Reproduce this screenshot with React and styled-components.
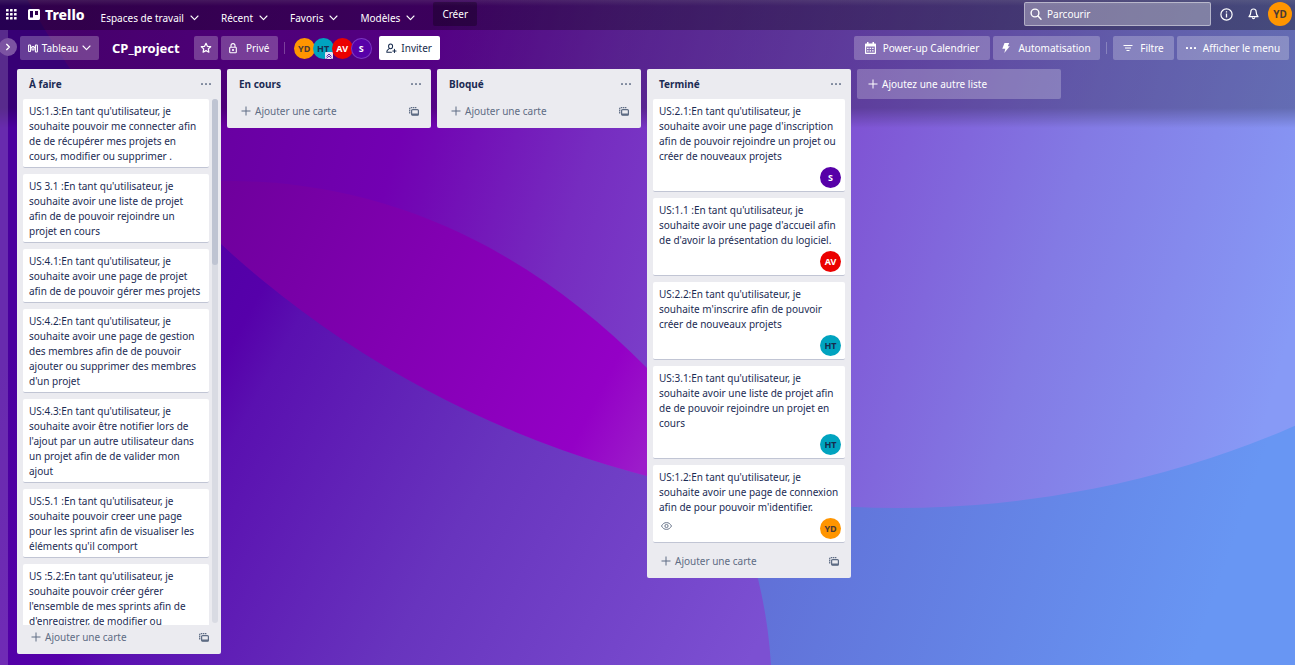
import React from "react";
import styled, { createGlobalStyle } from "styled-components";

const GlobalStyle = createGlobalStyle`
  *, *::before, *::after { box-sizing: border-box; }
  body {
    margin: 0;
    background: #5600aa;
    color: #1b2b54;
    font: 10px/15px "Noto Sans", "Open Sans", sans-serif;
  }
  button, input { font: inherit; color: inherit; }
  button { border: 0; padding: 0; background: none; cursor: pointer; }
  h1, h2, p, ul { margin: 0; padding: 0; }
  ul { list-style: none; }
  svg { display: block; flex: none; }
`;

const Page = styled.div`
  position: relative;
  isolation: isolate;
  display: flex;
  flex-direction: column;
  height: 100vh;
  overflow: hidden;
`;

const Wallpaper = styled.svg`
  position: absolute;
  inset: 0;
  z-index: -2;
  width: 100%;
  height: 100%;
`;

const TopShade = styled.div`
  position: absolute;
  inset: 0 0 auto;
  z-index: -1;
  height: 128px;
  background: linear-gradient(rgba(0, 0, 0, 0.26) 108px, rgba(0, 0, 0, 0));
`;

const Header = styled.header`
  display: flex;
  align-items: flex-start;
  height: 30px;
  padding: 2px 3px 0 6px;
  color: #fff;
  background: linear-gradient(rgba(60, 60, 60, 0.4), rgba(0, 0, 0, 0.3) 6px);
`;

const IconButton = styled.button`
  display: flex;
  align-items: center;
  justify-content: center;
  width: ${(p) => p.$w || 27}px;
  height: 24px;
`;

const Logo = styled.a`
  display: flex;
  align-items: center;
  gap: 5px;
  height: 25px;
  margin: 0 16px 0 11px;
  color: #fff;
  font-size: 14px;
  font-weight: 800;
  text-decoration: none;
`;

const Nav = styled.nav`
  display: flex;
  gap: 22px;
  padding-top: 4px;
`;

const NavItem = styled.button`
  display: flex;
  align-items: center;
  gap: 6px;
  height: 24px;
`;

const CreateButton = styled.button`
  height: 24px;
  margin-left: 18px;
  padding: 0 9px;
  border-radius: 2px;
  background: rgba(0, 0, 0, 0.28);
`;

const Tools = styled.div`
  display: flex;
  align-items: center;
  margin-left: auto;

  & > :last-child { margin-left: 1px; }
`;

const Search = styled.label`
  display: flex;
  align-items: center;
  gap: 5px;
  width: 187px;
  height: 24px;
  margin-right: 2px;
  padding: 0 5px;
  border: 1px solid rgba(255, 255, 255, 0.42);
  border-radius: 2px;
  background: rgba(255, 255, 255, 0.32);

  input {
    flex: 1;
    min-width: 0;
    padding: 0;
    border: 0;
    outline: 0;
    background: none;
  }
  input::placeholder { color: #fff; opacity: 1; }
`;

const avatarTones = {
  YD: ["#ff9500", "#4a3a35"],
  HT: ["#00a3bf", "#172b4d"],
  AV: ["#eb0000", "#fff"],
  S: ["#5700a8", "#fff"],
};

const Avatar = styled.span`
  position: relative;
  display: flex;
  align-items: center;
  justify-content: center;
  flex: none;
  width: ${(p) => p.$size || 21}px;
  height: ${(p) => p.$size || 21}px;
  border-radius: 50%;
  background: ${(p) => avatarTones[p.$who][0]};
  color: ${(p) => avatarTones[p.$who][1]};
  font-size: ${(p) => (p.$size ? 10 : 9)}px;
  font-weight: 700;
  box-shadow: ${(p) => (p.$ring ? "inset 0 0 0 1px rgba(140, 80, 200, 0.7)" : "none")};
`;

const AdminMark = styled.svg`
  position: absolute;
  right: 1px;
  bottom: 0;
`;

const Body = styled.div`
  display: flex;
  flex: 1;
  min-height: 0;
`;

const Sidebar = styled.aside`
  position: relative;
  flex: none;
  width: 8px;
  background: rgba(255, 255, 255, 0.17);
`;

const SidebarToggle = styled.button`
  position: absolute;
  top: 8px;
  left: -1px;
  display: flex;
  align-items: center;
  justify-content: center;
  width: 18px;
  height: 18px;
  border-radius: 50%;
  background: #7c53a2;
  color: #fff;
`;

const Board = styled.main`
  display: flex;
  flex: 1;
  flex-direction: column;
  min-width: 0;
`;

const BoardBar = styled.div`
  display: flex;
  align-items: center;
  height: 36px;
  padding: 0 6px 0 12px;
  color: #fff;
`;

const BarButton = styled.button`
  display: flex;
  align-items: center;
  justify-content: center;
  gap: ${(p) => p.$gap || 6}px;
  min-width: ${(p) => p.$w}px;
  height: 24px;
  margin-right: 3px;
  border-radius: 2px;
  background: ${(p) => (p.$solid ? "#fff" : "rgba(255, 255, 255, 0.24)")};
  color: ${(p) => (p.$solid ? "#172b4d" : "#fff")};
  white-space: nowrap;
`;

const BoardTitle = styled.h1`
  margin: 0 14px 0 10px;
  font-size: 13px;
  font-weight: 700;
  line-height: 24px;
`;

const Divider = styled.span`
  width: 1px;
  height: 12px;
  margin: 0 6px 0 3px;
  background: rgba(255, 255, 255, 0.25);
`;

const Members = styled.div`
  display: flex;
  margin: 0 7px 0 3px;

  & > * + * { margin-left: -2px; }
`;

const BarEnd = styled.div`
  display: flex;
  align-items: center;
  margin-left: auto;

  & > :last-child { margin-right: 0; }
`;

const Lists = styled.div`
  display: flex;
  flex: 1;
  align-items: flex-start;
  gap: 6px;
  min-height: 0;
  padding: 3px 9px 11px;
`;

const List = styled.section`
  display: flex;
  flex: none;
  flex-direction: column;
  width: 204px;
  max-height: 100%;
  border-radius: 2px;
  background: #ebebf0;
`;

const ListHead = styled.div`
  display: flex;
  align-items: center;
  justify-content: space-between;
  flex: none;
  height: 30px;
  padding: 0 10px 0 12px;
  color: #7d879c;

  h2 {
    color: #1b2b54;
    font-size: 10px;
    font-weight: 700;
    line-height: 15px;
  }
`;

const ListBody = styled.div`
  display: flex;
  gap: 3px;
  min-height: 0;
  padding: 0 ${(p) => (p.$scroll ? 3 : 6)}px 0 6px;
`;

const Cards = styled.ul`
  flex: 1;
  min-width: 0;
  overflow-y: auto;
  scrollbar-width: none;
`;

const Card = styled.li`
  margin-bottom: 6px;
  padding: 5px 6px 3px;
  border-bottom: 1px solid #c1c5d4;
  border-radius: 2px;
  background: #fff;
`;

const CardFoot = styled.div`
  display: flex;
  align-items: flex-start;
  height: 24px;
  padding: 3px 0 0 2px;
  color: #6b778c;

  & > svg { margin-top: 4px; }
  & > :last-child { margin: 0 -2px 0 auto; }
`;

const ScrollTrack = styled.div`
  width: 6px;
  margin-bottom: 2px;
  border-radius: 3px;
  background: #d9dbe3;

  &::before {
    content: "";
    display: block;
    height: 166px;
    border-radius: 3px;
    background: #bfc4d2;
  }
`;

const ListFoot = styled.div`
  display: flex;
  align-items: center;
  justify-content: space-between;
  flex: none;
  height: 29px;
  padding: 0 12px 5px 14px;
  color: #5e6c84;
`;

const AddCard = styled.button`
  display: flex;
  align-items: center;
  gap: 4px;
`;

const AddList = styled.button`
  display: flex;
  align-items: center;
  gap: 4px;
  flex: none;
  width: 204px;
  height: 30px;
  padding: 0 11px;
  border-radius: 2px;
  background: rgba(255, 255, 255, 0.24);
  color: #fff;
`;

const Stroke = ({ size = 12, w = 1.2, children, view = "0 0 12 12" }) => (
  <svg width={size} height={size} viewBox={view} fill="none" stroke="currentColor" strokeWidth={w} strokeLinecap="round" strokeLinejoin="round" aria-hidden="true">
    {children}
  </svg>
);

const Chevron = () => (
  <svg width="9" height="6" viewBox="0 0 9 6" fill="none" stroke="currentColor" strokeWidth="1.1" strokeLinecap="round" strokeLinejoin="round" aria-hidden="true">
    <path d="M1 1l3.5 3.7L8 1" />
  </svg>
);

const Plus = () => (
  <svg width="10" height="10" viewBox="0 0 10 10" stroke="currentColor" strokeWidth="1" aria-hidden="true">
    <path d="M5 .5v9M.5 5h9" />
  </svg>
);

const Dots = () => (
  <svg width="10" height="2" viewBox="0 0 10 2" fill="currentColor" aria-hidden="true">
    <rect x="0" width="2" height="2" rx=".6" />
    <rect x="4" width="2" height="2" rx=".6" />
    <rect x="8" width="2" height="2" rx=".6" />
  </svg>
);

const AppsIcon = () => (
  <svg width="11" height="11" viewBox="0 0 11 11" fill="currentColor" aria-hidden="true">
    {[0, 4, 8].map((y) => [0, 4, 8].map((x) => <rect key={`${x}-${y}`} x={x} y={y} width="2.6" height="2.6" rx=".5" />))}
  </svg>
);

const TrelloMark = () => (
  <svg width="12" height="11" viewBox="0 0 12 11" aria-hidden="true">
    <path fill="currentColor" fillRule="evenodd" d="M1.5 0h9A1.5 1.5 0 0112 1.5v8A1.5 1.5 0 0110.5 11h-9A1.5 1.5 0 010 9.500v-8A1.500 1.500 0 011.500 0zM2 2v6.500h3V2zM7 2v4h3V2z" />
  </svg>
);

const BoardIcon = () => (
  <svg width="10" height="9" viewBox="0 0 10 9" fill="none" stroke="currentColor" strokeWidth="1.100" aria-hidden="true">
    <rect x=".6" y="1" width="2" height="6.500" rx=".6" />
    <rect x="4" y="2.500" width="2" height="3.500" rx=".6" />
    <rect x="7.400" y="1" width="2" height="7" rx=".6" />
    <path d="M2.600 3.500H4M6 3.500h1.400" />
  </svg>
);

const StarIcon = () => (
  <Stroke>
    <path d="M6 1.300l1.400 3 3.300.4-2.400 2.200.6 3.300L6 8.600 3.100 10.200l.6-3.300L1.300 4.700l3.300-.4z" />
  </Stroke>
);

const LockIcon = () => (
  <svg width="8" height="11" viewBox="0 0 8 11" fill="none" stroke="currentColor" strokeWidth="1.100" aria-hidden="true">
    <rect x=".7" y="4.200" width="6.600" height="5.500" rx=".8" />
    <path d="M2 4V2.600a2 2 0 014 0V4" />
    <circle cx="4" cy="7" r=".5" fill="currentColor" />
  </svg>
);

const InviteIcon = () => (
  <Stroke size={11} w={1.1}>
    <ellipse cx="5" cy="3.600" rx="2.200" ry="2.600" />
    <path d="M3.600 6L1.600 7.800c-.7.600-.7 1.200-.7 2.300h5M9.200 6.800v3.600M7.400 8.600H11" />
  </Stroke>
);

const CalendarIcon = () => (
  <svg width="11" height="12" viewBox="0 0 11 12" aria-hidden="true">
    <path fill="currentColor" fillRule="evenodd" d="M2 0h1.500v1.500h4V0H9v1.500h1c.6 0 1 .4 1 1V11c0 .6-.4 1-1 1H1c-.6 0-1-.4-1-1V2.500c0-.6.4-1 1-1h1zM1.200 4.500v6.300h8.600V4.500z" />
    <path stroke="currentColor" strokeWidth="1.300" strokeDasharray="1.500 1" d="M2.100 6.400h7M2.100 8.900h7" />
  </svg>
);

const BoltIcon = () => (
  <svg width="8" height="10" viewBox="0 0 8 10" fill="currentColor" aria-hidden="true">
    <path d="M2.500 0h4.700L5.800 3.300h2L2.300 10l1-4.200H.3z" />
  </svg>
);

const FilterIcon = () => (
  <svg width="10" height="8" viewBox="0 0 10 8" stroke="currentColor" strokeWidth="1" aria-hidden="true">
    <path d="M.5 1.500h9M2 4h6M3.500 6.500h3" />
  </svg>
);

const TemplateIcon = () => (
  <svg width="10" height="9" viewBox="0 0 10 9" fill="none" stroke="currentColor" aria-hidden="true">
    <path d="M.7 6.600V1.700a1 1 0 011-1H7.800" strokeWidth="1.300" strokeDasharray="1.500 .6" />
    <rect x="2.600" y="2.600" width="6.800" height="5.600" rx="1" strokeWidth="1.200" />
    <path d="M2.600 7.400h6.800" strokeWidth="1.800" />
  </svg>
);

const EyeIcon = () => (
  <svg width="11" height="8" viewBox="0 0 11 8" fill="none" stroke="currentColor" aria-hidden="true">
    <path d="M.5 4C1.800 1.600 3.500.6 5.500.6S9.200 1.600 10.500 4C9.200 6.400 7.500 7.400 5.500 7.400S1.800 6.400.5 4z" />
    <circle cx="5.500" cy="4" r="1.600" />
  </svg>
);

const SearchIcon = () => (
  <Stroke size={12} w={1.4}>
    <circle cx="5" cy="5" r="3.900" />
    <path d="M8 8l3 3.200" />
  </Stroke>
);

const InfoIcon = () => (
  <svg width="13" height="13" viewBox="0 0 13 13" fill="none" stroke="currentColor" strokeWidth="1.200" aria-hidden="true">
    <circle cx="6.500" cy="6.500" r="5.600" />
    <path d="M6.500 5.600v4M6.500 3.200v1.300" strokeWidth="1.300" />
  </svg>
);

const BellIcon = () => (
  <svg width="11" height="12" viewBox="0 0 11 12" fill="none" stroke="currentColor" strokeWidth="1.200" strokeLinejoin="round" aria-hidden="true">
    <path d="M5.500 1C3.700 1 2.800 2.400 2.800 4c0 2.200-.5 3.300-1.800 4.700h9C8.700 7.300 8.200 6.200 8.200 4c0-1.600-.9-3-2.700-3zM4.300 9.500c.2 1.500 2.200 1.500 2.400 0" />
  </svg>
);

const Background = () => (
  <Wallpaper viewBox="0 0 1295 665" preserveAspectRatio="none" aria-hidden="true">
    <defs>
      <linearGradient id="sky" gradientUnits="userSpaceOnUse" x1="740" y1="480" x2="1200" y2="640">
        <stop offset="0" stopColor="#606cd4" />
        <stop offset="1" stopColor="#6896f3" />
      </linearGradient>
      <linearGradient id="disc" gradientUnits="userSpaceOnUse" x1="60" y1="100" x2="1260" y2="440">
        <stop offset="0" stopColor="#5f0092" />
        <stop offset=".27" stopColor="#7200b2" />
        <stop offset=".3" stopColor="#7208b4" />
        <stop offset=".42" stopColor="#762cc0" />
        <stop offset=".62" stopColor="#7f54d4" />
        <stop offset=".8" stopColor="#837ae4" />
        <stop offset="1" stopColor="#879af6" />
      </linearGradient>
      <linearGradient id="low" gradientUnits="userSpaceOnUse" x1="60" y1="260" x2="760" y2="640">
        <stop offset="0" stopColor="#4a009e" />
        <stop offset=".24" stopColor="#5600aa" />
        <stop offset=".3" stopColor="#5a10b0" />
        <stop offset=".6" stopColor="#6834be" />
        <stop offset="1" stopColor="#7c50d2" />
      </linearGradient>
      <linearGradient id="lens" gradientUnits="userSpaceOnUse" x1="210" y1="200" x2="660" y2="430">
        <stop offset="0" stopColor="#6e009c" />
        <stop offset=".45" stopColor="#8200b2" />
        <stop offset=".86" stopColor="#9400c6" />
        <stop offset="1" stopColor="#9c1cca" />
      </linearGradient>
      <clipPath id="discClip">
        <circle cx="898" cy="-492" r="1000" />
      </clipPath>
    </defs>
    <rect width="1295" height="665" fill="url(#sky)" />
    <path d="M0 0H228V181C390 181 530 250 647 368C712 438 764 545 771 665H0z" fill="url(#low)" />
    <circle cx="898" cy="-492" r="1000" fill="url(#disc)" />
    <path clipPath="url(#discClip)" d="M100 196C140 185 185 181 228 181C390 181 530 250 647 368C712 438 764 545 771 665H100z" fill="url(#lens)" />
  </Wallpaper>
);

const lists = [
  {
    title: "À faire",
    scroll: true,
    cards: [
      { text: "US:1.3:En tant qu'utilisateur, je souhaite pouvoir me connecter afin de de récupérer mes projets en cours, modifier ou supprimer ." },
      { text: "US 3.1 :En tant qu'utilisateur, je souhaite avoir une liste de projet afin de de pouvoir rejoindre un projet en cours" },
      { text: "US:4.1:En tant qu'utilisateur, je souhaite avoir une page de projet afin de de pouvoir gérer mes projets" },
      { text: "US:4.2:En tant qu'utilisateur, je souhaite avoir une page de gestion des membres afin de de pouvoir ajouter ou supprimer des membres d'un projet" },
      { text: "US:4.3:En tant qu'utilisateur, je souhaite avoir être notifier lors de l'ajout par un autre utilisateur dans un projet afin de de valider mon ajout" },
      { text: "US:5.1 :En tant qu'utilisateur, je souhaite pouvoir creer une page pour les sprint afin de visualiser les éléments qu'il comport" },
      { text: "US :5.2:En tant qu'utilisateur, je souhaite pouvoir créer gérer l'ensemble de mes sprints afin de d'enregistrer, de modifier ou" },
    ],
  },
  { title: "En cours", cards: [] },
  { title: "Bloqué", cards: [] },
  {
    title: "Terminé",
    cards: [
      { text: "US:2.1:En tant qu'utilisateur, je souhaite avoir une page d'inscription afin de pouvoir rejoindre un projet ou créer de nouveaux projets", who: "S" },
      { text: "US:1.1 :En tant qu'utilisateur, je souhaite avoir une page d'accueil afin de d'avoir la présentation du logiciel.", who: "AV" },
      { text: "US:2.2:En tant qu'utilisateur, je souhaite m'inscrire afin de pouvoir créer de nouveaux projets", who: "HT" },
      { text: "US:3.1:En tant qu'utilisateur, je souhaite avoir une liste de projet afin de de pouvoir rejoindre un projet en cours", who: "HT" },
      { text: "US:1.2:En tant qu'utilisateur, je souhaite avoir une page de connexion afin de pour pouvoir m'identifier.", who: "YD", watched: true },
    ],
  },
];

export default function App() {
  return (
    <Page>
      <GlobalStyle />
      <Background />
      <TopShade />
      <Header>
        <IconButton $w={11} aria-label="Applications"><AppsIcon /></IconButton>
        <Logo href="#"><TrelloMark />Trello</Logo>
        <Nav>
          {["Espaces de travail", "Récent", "Favoris", "Modèles"].map((label) => (
            <NavItem key={label}>{label}<Chevron /></NavItem>
          ))}
        </Nav>
        <CreateButton>Créer</CreateButton>
        <Tools>
          <Search>
            <SearchIcon />
            <input type="search" placeholder="Parcourir" aria-label="Parcourir" />
          </Search>
          <IconButton aria-label="Informations"><InfoIcon /></IconButton>
          <IconButton aria-label="Notifications"><BellIcon /></IconButton>
          <Avatar $who="YD" $size={24}>YD</Avatar>
        </Tools>
      </Header>
      <Body>
        <Sidebar>
          <SidebarToggle aria-label="Ouvrir la barre">
            <Stroke size={8} w={2}><path d="M4 2l4 4-4 4" /></Stroke>
          </SidebarToggle>
        </Sidebar>
        <Board>
          <BoardBar>
            <BarButton $w={79} $gap={4}><BoardIcon />Tableau<Chevron /></BarButton>
            <BoardTitle>CP_project</BoardTitle>
            <BarButton $w={24} aria-label="Favori"><StarIcon /></BarButton>
            <BarButton $w={57} $gap={9}><LockIcon />Privé</BarButton>
            <Divider />
            <Members>
              <Avatar $who="YD">YD</Avatar>
              <Avatar $who="HT">
                HT
                <AdminMark width="8" height="7" viewBox="0 0 8 7" aria-hidden="true">
                  <rect width="8" height="7" rx="1" fill="#e6e0f5" />
                  <path d="M1.500 4.500L4 2l2.500 2.500M1.500 6.300L4 4l2.500 2.300" fill="none" stroke="#5b2aa8" />
                </AdminMark>
              </Avatar>
              <Avatar $who="AV">AV</Avatar>
              <Avatar $who="S" $ring>S</Avatar>
            </Members>
            <BarButton $w={61} $gap={4} $solid><InviteIcon />Inviter</BarButton>
            <BarEnd>
              <BarButton $w={136} $gap={7}><CalendarIcon />Power-up Calendrier</BarButton>
              <BarButton $w={107} $gap={8}><BoltIcon />Automatisation</BarButton>
              <Divider />
              <BarButton $w={61} $gap={7}><FilterIcon />Filtre</BarButton>
              <BarButton $w={112} $gap={7}><Dots />Afficher le menu</BarButton>
            </BarEnd>
          </BoardBar>
          <Lists>
            {lists.map((list) => (
              <List key={list.title}>
                <ListHead>
                  <h2>{list.title}</h2>
                  <button aria-label={`Actions ${list.title}`}><Dots /></button>
                </ListHead>
                <ListBody $scroll={list.scroll}>
                  <Cards>
                    {list.cards.map((card) => (
                      <Card key={card.text}>
                        <p>{card.text}</p>
                        {card.who && (
                          <CardFoot>
                            {card.watched && <EyeIcon />}
                            <Avatar $who={card.who}>{card.who}</Avatar>
                          </CardFoot>
                        )}
                      </Card>
                    ))}
                  </Cards>
                  {list.scroll && <ScrollTrack />}
                </ListBody>
                <ListFoot>
                  <AddCard><Plus />Ajouter une carte</AddCard>
                  <button aria-label="Créer à partir d'un modèle"><TemplateIcon /></button>
                </ListFoot>
              </List>
            ))}
            <AddList><Plus />Ajoutez une autre liste</AddList>
          </Lists>
        </Board>
      </Body>
    </Page>
  );
}
